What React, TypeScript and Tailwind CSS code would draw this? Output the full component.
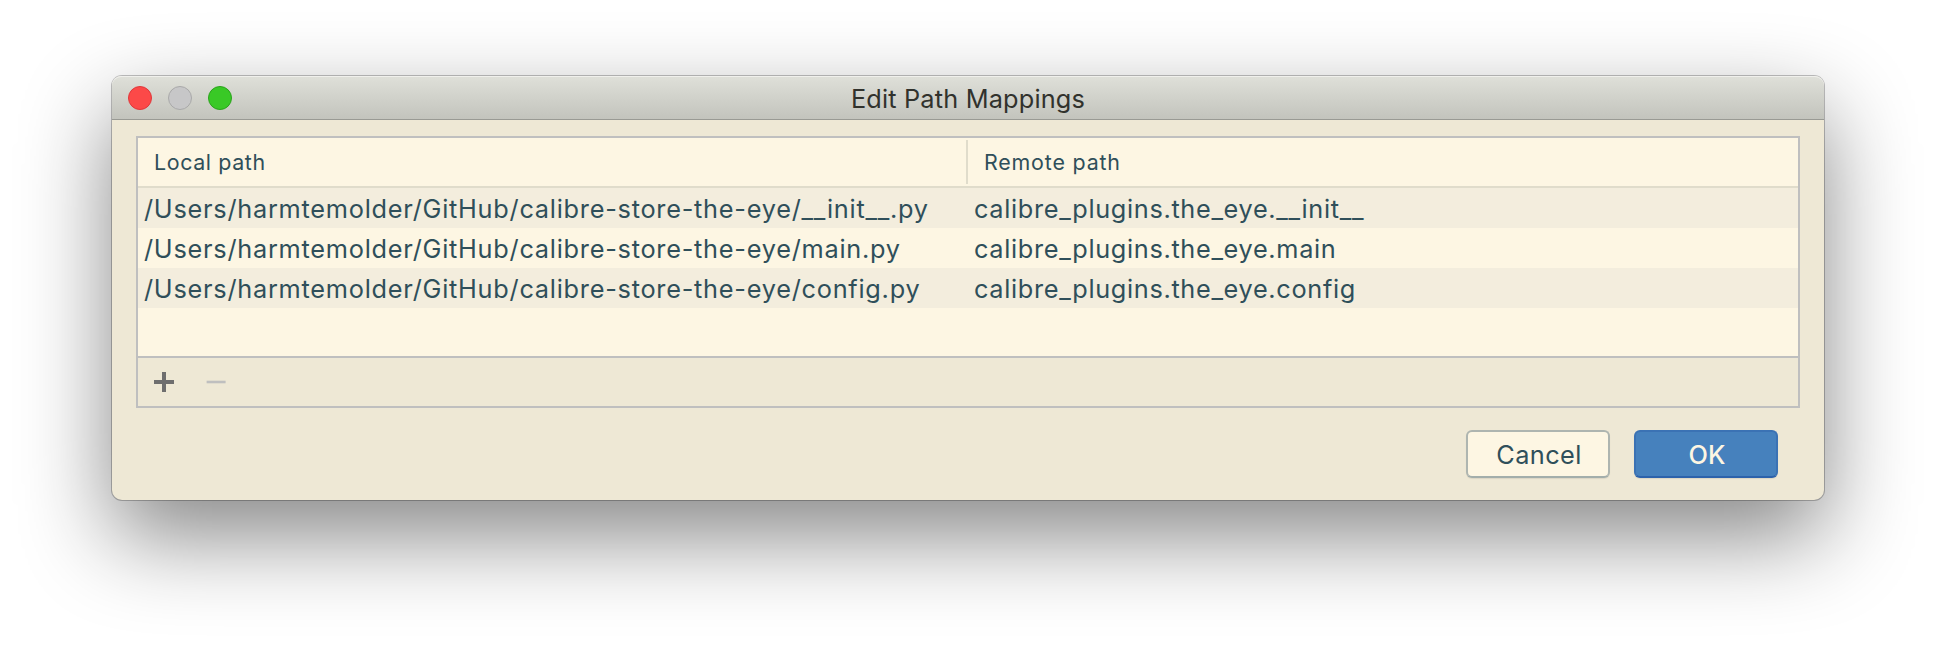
const mappings = [
  { local: "/Users/harmtemolder/GitHub/calibre-store-the-eye/__init__.py", remote: "calibre_plugins.the_eye.__init__" },
  { local: "/Users/harmtemolder/GitHub/calibre-store-the-eye/main.py", remote: "calibre_plugins.the_eye.main" },
  { local: "/Users/harmtemolder/GitHub/calibre-store-the-eye/config.py", remote: "calibre_plugins.the_eye.config" },
];

function TitleBar() {
  return (
    <header className="grid h-11 grid-cols-[1fr_auto_1fr] items-center rounded-t-[9px] border-b border-[#999a94] bg-linear-to-b from-[#dfe0d9] to-[#c3c4bd] px-4 shadow-[inset_0_1px_0_#f0f0ec]">
      <div className="flex gap-4">
        <span className="size-6 rounded-full border border-[#e0383b] bg-[#fc4948]" />
        <span className="size-6 rounded-full border border-[#a9a9a9] bg-[#c7c7c8]" />
        <span className="size-6 rounded-full border border-[#2ba31c] bg-[#39c926]" />
      </div>
      <h1 className="pt-0.5 text-[25.3px] leading-none tracking-[0.18px] text-[#31322d]">Edit Path Mappings</h1>
    </header>
  );
}

function MappingTable() {
  return (
    <section className="border-2 border-[#bfbfbf] bg-[#fdf6e3]">
      <div className="flex h-[50px] items-center border-b-2 border-[#e0dccb] py-0.5 text-[21.4px]">
        <div className="flex h-full w-[830px] items-center border-r-2 border-[#e0dccb] pl-4 tracking-[0.62px]">Local path</div>
        <div className="pl-4 tracking-[0.82px]">Remote path</div>
      </div>
      <div className="h-[168px] text-[25.3px]">
        {mappings.map((m) => (
          <div key={m.local} className="flex h-10 items-center pt-0.5 whitespace-nowrap odd:bg-[#f3eddd]">
            <div className="w-[830px] pl-1.5 tracking-[0.75px]">{m.local}</div>
            <div className="pl-1.5 tracking-[0.67px]">{m.remote}</div>
          </div>
        ))}
      </div>
      <div className="flex h-[50px] items-center gap-8 border-t-2 border-[#bfbfbf] bg-[#eee8d5] pl-4">
        <svg className="size-5" viewBox="0 0 20 20" fill="#6e6e6e">
          <path d="M8 0h4v8h8v4h-8v8H8v-8H0V8h8z" />
        </svg>
        <svg className="size-5" viewBox="0 0 20 20" fill="#bfbfbf">
          <path d="M.6 8.7h19v2.6H.6z" />
        </svg>
      </div>
    </section>
  );
}

export default function App() {
  return (
    <main className="h-[648px] w-[1936px] overflow-hidden bg-white px-28 pt-19 font-['Inter',sans-serif] text-[#2f4f5a]">
      <div className="flex h-[424px] flex-col rounded-[10px] bg-[#eee8d5] shadow-[0_0_0_1px_rgba(0,0,0,0.24),0_36px_90px_rgba(0,0,0,0.48)]">
        <TitleBar />
        <div className="flex flex-col gap-[22px] px-6 pt-4">
          <MappingTable />
          <div className="flex justify-end gap-6 pr-[22px] text-[25.3px]">
            <button className="h-12 w-36 rounded-md border-2 border-[#aeb5b0] border-b-[#a3aeab] bg-[#fdf6e3] pt-0.5 pl-0.5 tracking-[0.4px] shadow-[0_1px_1px_rgba(0,0,0,0.08)]">Cancel</button>
            <button className="h-12 w-36 rounded-md border-2 border-[#3b72b4] border-b-[#2c62ab] bg-[#4681bd] pt-0.5 pl-0.5 font-medium text-[#fdf6e3] shadow-[0_1px_1px_rgba(0,0,0,0.08)]">OK</button>
          </div>
        </div>
      </div>
    </main>
  );
}
